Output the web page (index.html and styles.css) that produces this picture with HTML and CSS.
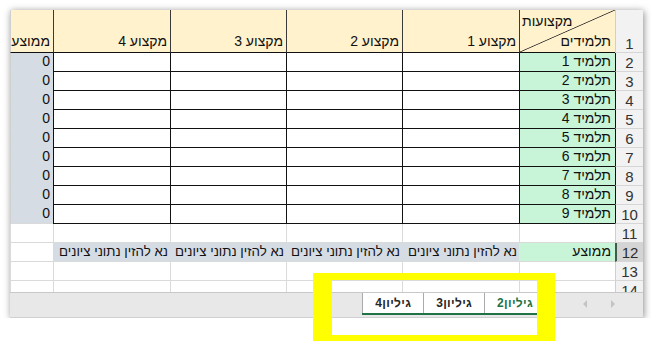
FILE: index.html
```html
<!DOCTYPE html>
<html dir="rtl" lang="he">
<head>
    <meta charset="utf-8">
    <title>ציונים</title>
    <link rel="stylesheet" href="styles.css">
</head>
<body>
    <div class="window">
        <div class="sheet-wrap">
            <table class="sheet">
                <colgroup>
                    <col class="w-rh"><col class="w-st"><col class="w-c"><col class="w-c2"><col class="w-c2"><col class="w-c"><col class="w-av">
                </colgroup>
                <tr class="head-row">
                    <td class="rh">1</td>
                    <td class="hd diag">
                        <div class="diag-box">
                            <span class="diag-top">מקצועות</span>
                            <span class="diag-bottom">תלמידים</span>
                        </div>
                    </td>
                    <td class="hd">מקצוע 1</td>
                    <td class="hd">מקצוע 2</td>
                    <td class="hd">מקצוע 3</td>
                    <td class="hd">מקצוע 4</td>
                    <td class="hd hd-last">ממוצע</td>
                </tr>
                <tr><td class="rh edge">2</td><td class="st">תלמיד 1</td><td class="dc"></td><td class="dc"></td><td class="dc"></td><td class="dc"></td><td class="av">0</td></tr>
                <tr><td class="rh edge">3</td><td class="st">תלמיד 2</td><td class="dc"></td><td class="dc"></td><td class="dc"></td><td class="dc"></td><td class="av">0</td></tr>
                <tr><td class="rh edge">4</td><td class="st">תלמיד 3</td><td class="dc"></td><td class="dc"></td><td class="dc"></td><td class="dc"></td><td class="av">0</td></tr>
                <tr><td class="rh edge">5</td><td class="st">תלמיד 4</td><td class="dc"></td><td class="dc"></td><td class="dc"></td><td class="dc"></td><td class="av">0</td></tr>
                <tr><td class="rh edge">6</td><td class="st">תלמיד 5</td><td class="dc"></td><td class="dc"></td><td class="dc"></td><td class="dc"></td><td class="av">0</td></tr>
                <tr><td class="rh edge">7</td><td class="st">תלמיד 6</td><td class="dc"></td><td class="dc"></td><td class="dc"></td><td class="dc"></td><td class="av">0</td></tr>
                <tr><td class="rh edge">8</td><td class="st">תלמיד 7</td><td class="dc"></td><td class="dc"></td><td class="dc"></td><td class="dc"></td><td class="av">0</td></tr>
                <tr><td class="rh edge">9</td><td class="st">תלמיד 8</td><td class="dc"></td><td class="dc"></td><td class="dc"></td><td class="dc"></td><td class="av">0</td></tr>
                <tr><td class="rh edge">10</td><td class="st">תלמיד 9</td><td class="dc"></td><td class="dc"></td><td class="dc"></td><td class="dc"></td><td class="av av-last">0</td></tr>
                <tr><td class="rh">11</td><td class="gc"></td><td class="gc"></td><td class="gc"></td><td class="gc"></td><td class="gc"></td><td class="gc"></td></tr>
                <tr>
                    <td class="rh selected">12</td>
                    <td class="st st-avg">ממוצע</td>
                    <td class="note">נא להזין נתוני ציונים</td>
                    <td class="note">נא להזין נתוני ציונים</td>
                    <td class="note">נא להזין נתוני ציונים</td>
                    <td class="note note-last">נא להזין נתוני ציונים</td>
                    <td class="gc"></td>
                </tr>
                <tr><td class="rh">13</td><td class="gc"></td><td class="gc"></td><td class="gc"></td><td class="gc"></td><td class="gc"></td><td class="gc"></td></tr>
                <tr><td class="rh">14</td><td class="gc"></td><td class="gc"></td><td class="gc"></td><td class="gc"></td><td class="gc"></td><td class="gc"></td></tr>
            </table>
        </div>
        <div class="tabbar">
            <div class="nav">
                <svg width="6" height="8" viewBox="0 0 6 8"><polygon points="1,0 5,4 1,8" fill="#c4c4c4"/></svg>
                <svg width="6" height="8" viewBox="0 0 6 8"><polygon points="5,0 1,4 5,8" fill="#c4c4c4"/></svg>
            </div>
            <div class="tabs">
                <div class="tab active">גיליון2</div>
                <div class="tab">גיליון3</div>
                <div class="tab">גיליון4</div>
            </div>
            <div class="add"></div>
        </div>
    </div>
    <div class="highlight"></div>
</body>
</html>
```

FILE: styles.css
```css
body {
    margin: 0;
    background-color: white;
    font-family: "Liberation Sans", Arial, sans-serif;
}
.window {
    position: relative;
    width: 633px;
    height: 308px;
    margin: 10px 8px 0 0;
    background-color: white;
    box-shadow: 1px 1px 7px rgba(0, 0, 0, 0.45);
}
.sheet-wrap {
    height: 282px;
    overflow: hidden;
}
.sheet {
    table-layout: fixed;
    width: 633px;
    border-collapse: separate;
    border-spacing: 0;
    font-size: 14px;
    color: #111;
}
.w-rh { width: 28px; }
.w-st { width: 96px; }
.w-c { width: 117px; }
.w-c2 { width: 116px; }
.w-av { width: 43px; }
.sheet tr {
    height: 19px;
}
.sheet tr.head-row {
    height: 43px;
}
.sheet td {
    box-sizing: border-box;
    padding: 0 3px 1px 3px;
    line-height: 17px;
    vertical-align: bottom;
    text-align: right;
    white-space: nowrap;
    overflow: hidden;
    border-left: 1px solid #dadada;
    border-bottom: 1px solid #dadada;
}
.rh {
    background-color: #f2f2f2;
    color: #333;
    font-size: 15px;
    text-align: center !important;
    padding: 0 !important;
    border-left-color: #cfcfcf !important;
    border-bottom-color: #d6d6d6 !important;
}
.rh.edge {
    border-left-color: #111 !important;
}
.rh.selected {
    background-color: #d4d4d4;
    color: #2c2c2c;
    border-left: 2px solid #3d5c4a !important;
}
.hd {
    background-color: #fff2cc;
    border-left-color: #3a3a3a !important;
    border-bottom-color: #111 !important;
    padding-bottom: 2px !important;
}
.hd-last {
    border-left-color: #d0d0d0 !important;
}
.diag {
    padding: 0 !important;
    background: linear-gradient(to top left, transparent calc(50% - 0.8px), #333 50%, transparent calc(50% + 0.8px)), #fff2cc;
}
.diag-box {
    height: 42px;
    display: flex;
    flex-direction: column;
    justify-content: space-between;
    padding: 3px 4px 2px 2px;
    box-sizing: border-box;
}
.diag-top {
    text-align: left;
}
.st {
    background-color: #c8f5d8;
    border-left-color: #111 !important;
    border-bottom-color: #111 !important;
    padding-right: 4px !important;
}
.st-avg {
    border-left-color: #c8f5d8 !important;
    border-bottom-color: #dadada !important;
}
.dc {
    background-color: white;
    border-left-color: #111 !important;
    border-bottom-color: #111 !important;
}
.av {
    background-color: #d6dce4;
    border-left-color: #d0d0d0 !important;
    border-bottom-color: #d6dce4 !important;
}
.av-last {
    border-bottom-color: #dadada !important;
}
.note {
    background-color: #d6dce4;
    border-left-color: #d6dce4 !important;
    padding-right: 2px !important;
    font-size: 13.3px;
}
.note-last {
    border-left-color: #dadada !important;
}
.tabbar {
    display: flex;
    align-items: flex-start;
    height: 26px;
    box-sizing: border-box;
    background-color: #e8e8e8;
    border-top: 1px solid #c8c8c8;
    border-bottom: 1px solid #d0d0d0;
}
.nav {
    width: 98px;
    height: 22px;
    display: flex;
    align-items: center;
    gap: 22px;
    padding-right: 27px;
    box-sizing: border-box;
}
.tabs {
    display: flex;
    border-bottom: 2px solid #217346;
}
.tab {
    height: 20px;
    line-height: 20px;
    padding: 0 12px;
    background-color: white;
    border-left: 1px solid #ababab;
    font-size: 12px;
    font-weight: bold;
    letter-spacing: 0.3px;
    color: #262626;
}
.tab.active {
    color: #217346;
}
.add {
    width: 13px;
    height: 13px;
    margin: 4px 34px 0 0;
    border: 1px solid #9c9c9c;
    border-radius: 50%;
}
.highlight {
    position: absolute;
    left: 313px;
    top: 273px;
    width: 242px;
    height: 68px;
    box-sizing: border-box;
    border-style: solid;
    border-color: #ffff00;
    border-width: 7px 18px 6px 19px;
}
```
